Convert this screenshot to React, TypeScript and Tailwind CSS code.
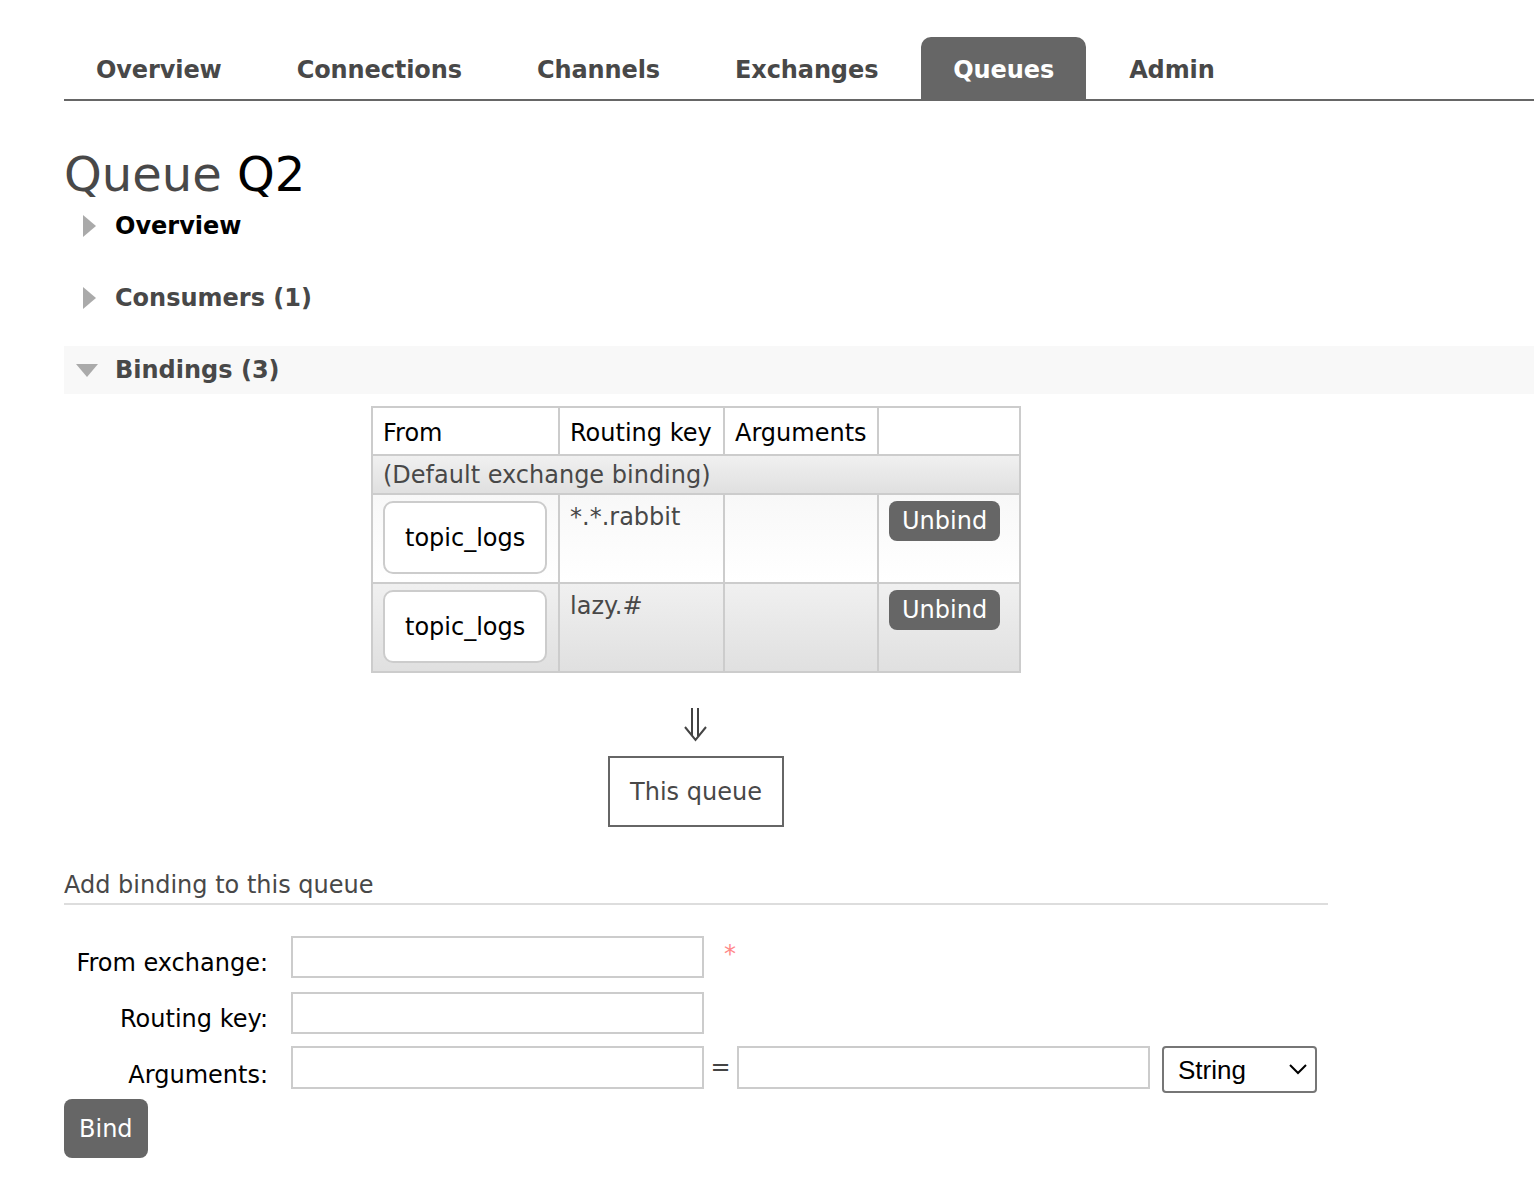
import { useState } from 'react';

const tabs = ['Overview', 'Connections', 'Channels', 'Exchanges', 'Queues', 'Admin'];

const bindings = [
  { source: 'topic_logs', key: '*.*.rabbit', alt: false },
  { source: 'topic_logs', key: 'lazy.#', alt: true },
];

function RightTriangle() {
  return (
    <svg width="13" height="22" viewBox="0 0 13 22" className="block">
      <polygon points="0,0 13,11 0,22" fill="#aaaaaa" />
    </svg>
  );
}

function DownTriangle() {
  return (
    <svg width="22" height="13" viewBox="0 0 22 13" className="block">
      <polygon points="0,0 22,0 11,13" fill="#aaaaaa" />
    </svg>
  );
}

function SectionHeading({ title, open, dark }: { title: string; open?: boolean; dark?: boolean }) {
  return (
    <h2
      className={`flex items-center py-[10px] text-[24px] leading-[28px] font-bold ${
        open ? 'bg-[#f8f8f8]' : ''
      } ${dark ? 'text-black' : 'text-[#484848]'}`}
    >
      <span className={`flex w-[51px] shrink-0 ${open ? 'pl-[12px]' : 'pl-[19px]'}`}>
        {open ? <DownTriangle /> : <RightTriangle />}
      </span>
      {title}
    </h2>
  );
}

export default function App() {
  const [type, setType] = useState('string');

  return (
    <div className="min-h-screen bg-white pl-16 pt-[37px] font-['DejaVu_Sans','Verdana',sans-serif] text-[24px] leading-[28px] text-black">
      {/* Tabs */}
      <ul className="flex gap-[11px] border-b-2 border-[#666]">
        {tabs.map((t) => (
          <li key={t}>
            <a
              href="#"
              className={`block rounded-t-[10px] px-8 pt-[19px] pb-[15px] font-bold tracking-[-0.1px] ${
                t === 'Queues' ? 'bg-[#666] text-white' : 'text-[#484848]'
              }`}
            >
              {t}
            </a>
          </li>
        ))}
      </ul>

      <h1 className="mt-[45px] text-[48px] leading-[56px] font-normal text-[#484848]">
        Queue <span className="text-black">Q2</span>
      </h1>

      <SectionHeading title="Overview" dark />
      <div className="mt-6">
        <SectionHeading title="Consumers (1)" />
      </div>
      <div className="mt-6">
        <SectionHeading title="Bindings (3)" open />

        {/* Bindings diagram */}
        <div className="ml-[308px] mt-[12px] flex w-[648px] flex-col items-center">
          <table className="w-[648px] table-fixed border-collapse border-2 border-[#ccc]">
            <colgroup>
              <col className="w-[187px]" />
              <col className="w-[165px]" />
              <col className="w-[154px]" />
              <col className="w-[142px]" />
            </colgroup>
            <thead>
              <tr>
                <th className="border-2 border-[#ccc] bg-white px-[10px] pt-[11px] pb-[7px] text-left font-normal">From</th>
                <th className="border-2 border-[#ccc] bg-white px-[10px] pt-[11px] pb-[7px] text-left font-normal">Routing key</th>
                <th className="border-2 border-[#ccc] bg-white px-[10px] pt-[11px] pb-[7px] text-left font-normal">Arguments</th>
                <th className="border-2 border-[#ccc] bg-white px-[10px] pt-[11px] pb-[7px]"></th>
              </tr>
            </thead>
            <tbody>
              <tr>
                <td
                  colSpan={4}
                  className="border-2 border-[#ccc] bg-linear-to-b from-[#f0f0f0] to-[#e0e0e0] px-[10px] pt-[5px] pb-[4px] text-[#484848]"
                >
                  (Default exchange binding)
                </td>
              </tr>
              {bindings.map((b, i) => {
                const bg = b.alt
                  ? 'bg-linear-to-b from-[#f0f0f0] to-[#e0e0e0]'
                  : 'bg-linear-to-b from-[#f8f8f8] to-white';
                return (
                  <tr key={i}>
                    <td className={`border-2 border-[#ccc] px-[10px] pt-[6px] pb-[8px] align-top ${bg}`}>
                      <a
                        href="#"
                        className="inline-block rounded-[10px] border-2 border-[#ccc] bg-white px-5 py-[20.5px] text-black"
                      >
                        {b.source}
                      </a>
                    </td>
                    <td className={`border-2 border-[#ccc] px-[10px] pt-[8px] align-top text-[#484848] ${bg}`}>{b.key}</td>
                    <td className={`border-2 border-[#ccc] px-[10px] pt-[6px] align-top ${bg}`}></td>
                    <td className={`border-2 border-[#ccc] px-[10px] pt-[6px] align-top ${bg}`}>
                      <button className="rounded-[8px] bg-[#666] px-[13px] py-[6px] text-white">Unbind</button>
                    </td>
                  </tr>
                );
              })}
            </tbody>
          </table>

          <svg width="24" height="34" viewBox="0 0 24 34" className="mt-[35px] block" fill="none" stroke="#444" strokeWidth="2">
            <line x1="8" y1="0" x2="8" y2="28" />
            <line x1="14" y1="0" x2="14" y2="28" />
            <polyline points="1,19 11.5,32 22,19" />
          </svg>

          <div className="mt-[14px] border-2 border-[#666] px-5 py-[19.5px] text-[#484848]">This queue</div>
        </div>
      </div>

      {/* Add binding */}
      <div className="mt-[44px] w-[1264px]">
        <h3 className="border-b-2 border-[#ddd] pb-[4px] text-[24px] leading-[28px] font-normal text-[#484848]">
          Add binding to this queue
        </h3>

        <form className="mt-[31px]" onSubmit={(e) => e.preventDefault()}>
          <div className="flex items-start">
            <label className="w-[204px] pt-[13px] text-right">From exchange:</label>
            <input className="ml-[23px] h-[42px] w-[413px] border-2 border-[#ccc] bg-white px-2 outline-none" />
            <span className="ml-[20px] pt-[4px] text-[#f88]">*</span>
          </div>
          <div className="mt-[14px] flex items-start">
            <label className="w-[204px] pt-[13px] text-right">Routing key:</label>
            <input className="ml-[23px] h-[42px] w-[413px] border-2 border-[#ccc] bg-white px-2 outline-none" />
          </div>
          <div className="mt-[12px] flex items-start">
            <label className="w-[204px] pt-[15px] text-right">Arguments:</label>
            <input className="ml-[23px] h-[43px] w-[413px] border-2 border-[#ccc] bg-white px-2 outline-none" />
            <span className="w-[33px] pt-[7px] text-center text-[#444]">=</span>
            <input className="h-[43px] w-[413px] border-2 border-[#ccc] bg-white px-2 outline-none" />
            <div className="relative ml-[12px]">
              <select
                value={type}
                onChange={(e) => setType(e.target.value)}
                className="h-[47px] w-[155px] appearance-none rounded-[4px] border-2 border-[#767676] bg-white pl-[14px] font-['Liberation_Sans',Arial,sans-serif] text-[26px] text-black outline-none"
              >
                <option value="string">String</option>
                <option value="number">Number</option>
                <option value="boolean">Boolean</option>
                <option value="list">List</option>
              </select>
              <svg
                width="18"
                height="11"
                viewBox="0 0 18 11"
                className="pointer-events-none absolute top-[18px] right-[10px]"
                fill="none"
                stroke="#000"
                strokeWidth="2"
              >
                <polyline points="1,1 9,9 17,1" />
              </svg>
            </div>
          </div>
          <button type="submit" className="mt-[6px] block rounded-[8px] bg-[#666] px-[15px] py-[15.5px] text-white">
            Bind
          </button>
        </form>
      </div>
    </div>
  );
}
